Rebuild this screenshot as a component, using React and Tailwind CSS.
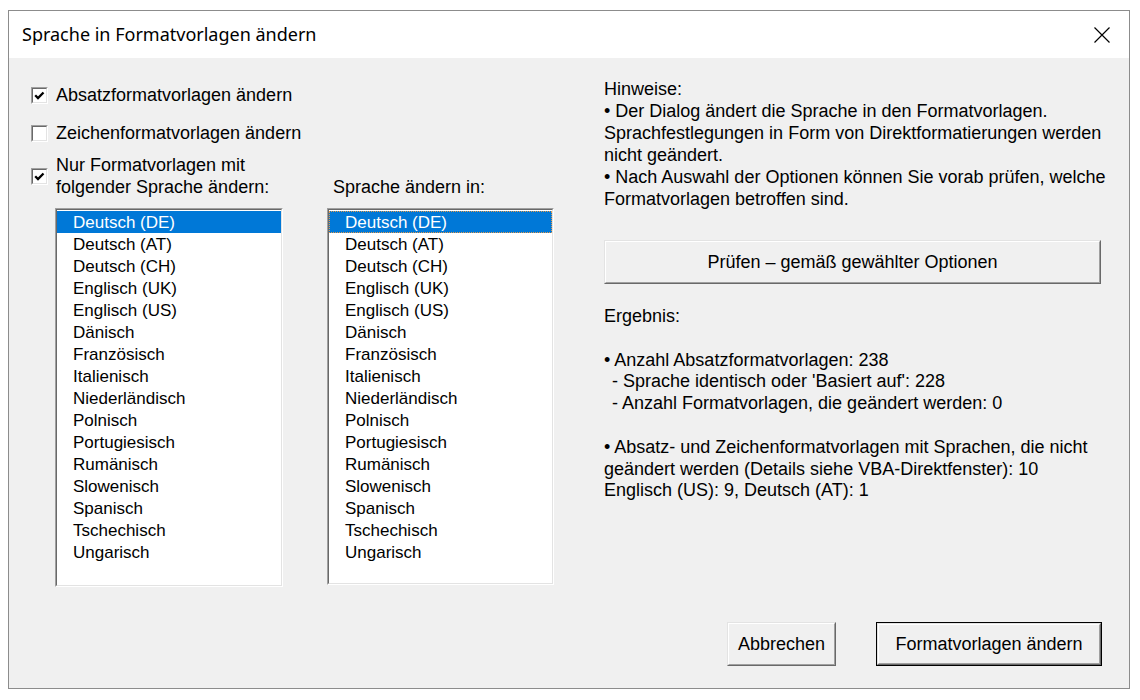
const SPRACHEN = [
  'Deutsch (DE)',
  'Deutsch (AT)',
  'Deutsch (CH)',
  'Englisch (UK)',
  'Englisch (US)',
  'Dänisch',
  'Französisch',
  'Italienisch',
  'Niederländisch',
  'Polnisch',
  'Portugiesisch',
  'Rumänisch',
  'Slowenisch',
  'Spanisch',
  'Tschechisch',
  'Ungarisch',
];

const CheckBox = ({ checked }) => (
  <span className="flex h-[17px] w-[17px] shrink-0 border border-t-[#a0a0a0] border-l-[#a0a0a0] border-b-white border-r-white">
    <span className="flex h-full w-full items-center justify-center border border-t-[#696969] border-l-[#696969] border-b-[#e3e3e3] border-r-[#e3e3e3] bg-white">
      {checked && (
        <svg width="13" height="13" viewBox="0 0 13 13">
          <path d="M2.2 6.2 L5 9 L10.5 3.5" fill="none" stroke="#000" strokeWidth="2.3" />
        </svg>
      )}
    </span>
  </span>
);

const ListBox = ({ items, focus, className }) => (
  <div className={`border border-t-[#a0a0a0] border-l-[#a0a0a0] border-b-white border-r-white ${className}`}>
    <div className="h-full border border-t-[#696969] border-l-[#696969] border-b-[#e3e3e3] border-r-[#e3e3e3] bg-white pt-px">
      {items.map((item, i) => (
        <div
          key={item}
          className={
            i === 0
              ? `h-[22px] bg-[#0078d7] pl-[16px] pt-px text-[17px] leading-[21px] text-white ${focus ? 'outline outline-1 outline-dotted outline-[#e39a4b] -outline-offset-1' : ''}`
              : 'h-[22px] pl-[16px] pt-px text-[17px] leading-[21px] text-black'
          }
        >
          {item}
        </div>
      ))}
    </div>
  </div>
);

const Button = ({ children, className, isDefault }) => (
  <div className={`${isDefault ? 'border border-black' : ''} ${className}`}>
    <div className="h-full border border-t-[#e3e3e3] border-l-[#e3e3e3] border-b-[#696969] border-r-[#696969]">
      <div className="flex h-full items-center justify-center border border-t-white border-l-white border-b-[#a0a0a0] border-r-[#a0a0a0] bg-[#f0f0f0] text-[18px] text-black">
        {children}
      </div>
    </div>
  </div>
);

export default function App() {
  return (
    <div className="h-[700px] w-[1140px] bg-white pt-[10px] pl-[8px] font-['Liberation_Sans',Arial,sans-serif] text-black">
      <div className="flex h-[679px] w-[1122px] flex-col border border-[#8c8c8c]">
        {/* Titelleiste */}
        <div className="flex h-[47px] shrink-0 items-center justify-between bg-white pl-[13px] pr-[19px]">
          <span className="font-['Noto_Sans',sans-serif] text-[18px] text-black">Sprache in Formatvorlagen ändern</span>
          <svg width="16" height="16" viewBox="0 0 16 16">
            <path d="M0.5 0.5 L15.5 15.5 M15.5 0.5 L0.5 15.5" stroke="#000" strokeWidth="1.2" />
          </svg>
        </div>

        <div className="flex flex-1 bg-[#f0f0f0]">
          {/* Linke Seite */}
          <div className="w-[585px] shrink-0 pl-[22px] pt-[26px]">
            <div className="flex h-[22px] items-center gap-[8px] text-[18px]">
              <CheckBox checked />
              <span>Absatzformatvorlagen ändern</span>
            </div>
            <div className="mt-[16px] flex h-[22px] items-center gap-[8px] text-[18px]">
              <CheckBox />
              <span>Zeichenformatvorlagen ändern</span>
            </div>
            <div className="mt-[10px] grid grid-cols-[296px_227px]">
              <div className="flex items-center gap-[8px] text-[18px] leading-[22px]">
                <CheckBox checked />
                <span>
                  Nur Formatvorlagen mit
                  <br />
                  folgender Sprache ändern:
                </span>
              </div>
              <div className="self-end pl-[6px] text-[18px] leading-[22px]">Sprache ändern in:</div>
              <div className="mt-[10px] pl-[24px]">
                <ListBox items={SPRACHEN} className="h-[379px] w-[228px]" />
              </div>
              <div className="mt-[10px]">
                <ListBox items={SPRACHEN} focus className="h-[377px] w-[227px]" />
              </div>
            </div>
          </div>

          {/* Rechte Seite */}
          <div className="flex min-w-0 flex-1 flex-col pl-[10px] pr-[27px] pt-[20px] pb-[22px]">
            <div className="whitespace-nowrap text-[18px] leading-[22px]">
              <div>Hinweise:</div>
              <div>• Der Dialog ändert die Sprache in den Formatvorlagen.</div>
              <div>Sprachfestlegungen in Form von Direktformatierungen werden</div>
              <div>nicht geändert.</div>
              <div>• Nach Auswahl der Optionen können Sie vorab prüfen, welche</div>
              <div>Formatvorlagen betroffen sind.</div>
            </div>

            <Button className="mt-[30px] h-[44px] w-[497px]">Prüfen – gemäß gewählter Optionen</Button>

            <div className="mt-[22px] whitespace-nowrap text-[18px] leading-[21.8px]">
              <div>Ergebnis:</div>
              <div>&nbsp;</div>
              <div>• Anzahl Absatzformatvorlagen: 238</div>
              <div className="pl-[8px]">- Sprache identisch oder 'Basiert auf': 228</div>
              <div className="pl-[8px]">- Anzahl Formatvorlagen, die geändert werden: 0</div>
              <div>&nbsp;</div>
              <div>• Absatz- und Zeichenformatvorlagen mit Sprachen, die nicht</div>
              <div>geändert werden (Details siehe VBA-Direktfenster): 10</div>
              <div>Englisch (US): 9, Deutsch (AT): 1</div>
            </div>

            <div className="mt-auto flex justify-end gap-[40px]">
              <Button className="h-[44px] w-[109px]">Abbrechen</Button>
              <Button isDefault className="h-[44px] w-[226px]">Formatvorlagen ändern</Button>
            </div>
          </div>
        </div>
      </div>
    </div>
  );
}
